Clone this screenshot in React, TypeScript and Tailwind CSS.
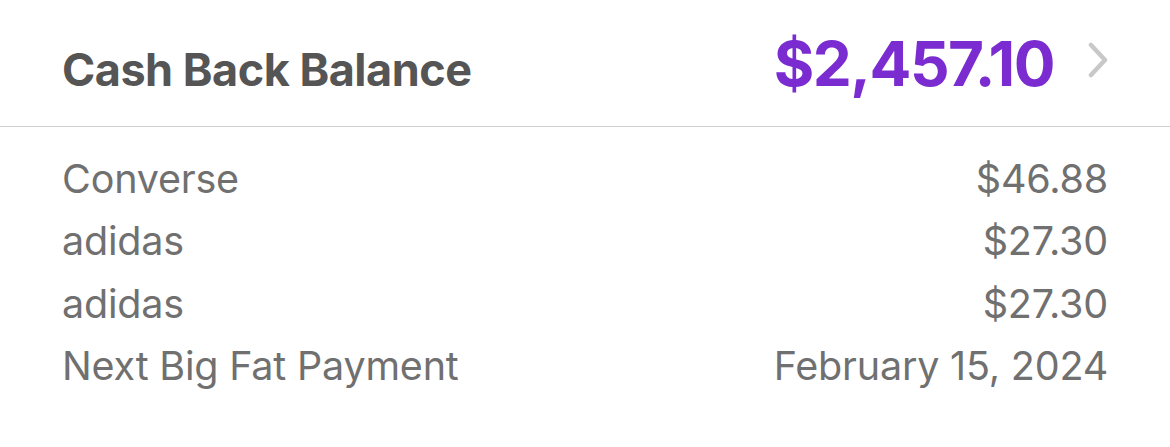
import React from "react";

const rows = [
  { label: "Converse", value: "$46.88" },
  { label: "adidas", value: "$27.30" },
  { label: "adidas", value: "$27.30" },
  { label: "Next Big Fat Payment", value: "February 15, 2024" },
];

export default function App() {
  return (
    <div
      className="w-[1170px] h-[447px] bg-white overflow-hidden"
      style={{ fontFamily: "Inter, Lato, sans-serif" }}
    >
      <div className="h-[127px] flex items-baseline justify-between pt-[33px] pl-[62px] pr-[62px] border-b border-[#cfcfcf]">
        <div className="text-[45px] font-bold text-[#555555] tracking-[-0.5px] leading-none">Cash Back Balance</div>
        <div className="flex items-center gap-[34px]">
          <div className="text-[62px] font-bold text-[#7b2cd1] leading-none tracking-[-1.5px]">$2,457.10</div>
          <svg width="20" height="36" viewBox="0 0 20 36" fill="none" className="-mt-[8px]">
            <path d="M3 3 L17 18 L3 33" stroke="#c8c8c8" strokeWidth="4.5" strokeLinecap="round" strokeLinejoin="round" />
          </svg>
        </div>
      </div>
      <div className="pl-[62px] pr-[62px] pt-[21px] flex flex-col">
        {rows.map((r, i) => (
          <div key={i} className="flex justify-between h-[62.5px] items-center text-[39.5px] tracking-[-0.2px] text-[#707070]">
            <span>{r.label}</span>
            <span>{r.value}</span>
          </div>
        ))}
      </div>
    </div>
  );
}
